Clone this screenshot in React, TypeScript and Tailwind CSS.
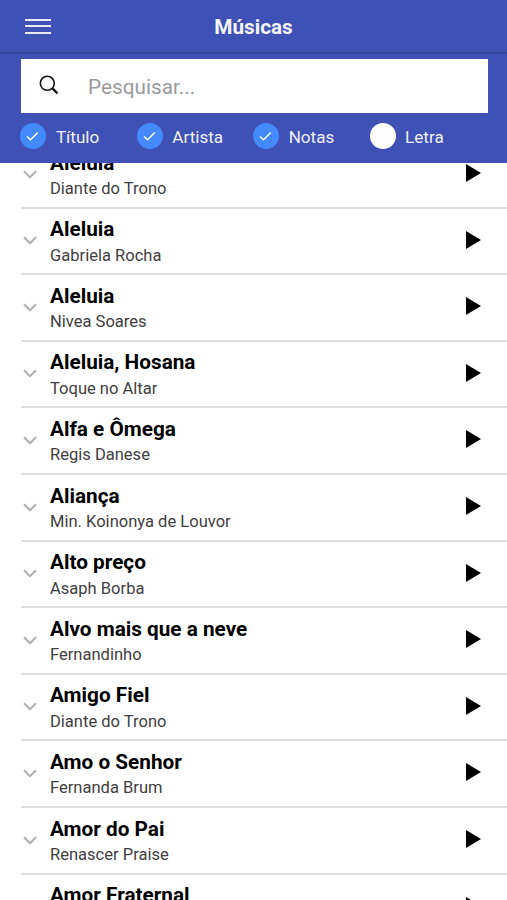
import React from "react";

interface Song {
    title: string;
    artist: string;
}

const songs: Song[] = [
    { title: "Aleluia", artist: "Diante do Trono" },
    { title: "Aleluia", artist: "Gabriela Rocha" },
    { title: "Aleluia", artist: "Nivea Soares" },
    { title: "Aleluia, Hosana", artist: "Toque no Altar" },
    { title: "Alfa e Ômega", artist: "Regis Danese" },
    { title: "Aliança", artist: "Min. Koinonya de Louvor" },
    { title: "Alto preço", artist: "Asaph Borba" },
    { title: "Alvo mais que a neve", artist: "Fernandinho" },
    { title: "Amigo Fiel", artist: "Diante do Trono" },
    { title: "Amo o Senhor", artist: "Fernanda Brum" },
    { title: "Amor do Pai", artist: "Renascer Praise" },
    { title: "Amor Fraternal", artist: "" },
];

const filters = [
    { label: "Título", checked: true },
    { label: "Artista", checked: true },
    { label: "Notas", checked: true },
    { label: "Letra", checked: false },
];

const FilterOption: React.FC<{ label: string; checked: boolean }> = ({ label, checked }) => (
    <button className="flex w-[116.4px] items-center gap-[9.5px]">
        <span
            className={`flex size-[26px] shrink-0 items-center justify-center rounded-full ${
                checked ? "bg-[#448aff]" : "bg-white"
            }`}
        >
            {checked && (
                <svg viewBox="0 0 26 26" className="size-[26px]" fill="none" stroke="#fff" strokeWidth="1.4">
                    <path d="M7 13.4l3.5 3.4 7.3-7.4" />
                </svg>
            )}
        </span>
        <span className="pt-px text-[17.1px] leading-6 text-[#eef0fb]">{label}</span>
    </button>
);

const SongRow: React.FC<{ song: Song }> = ({ song }) => (
    <li className="ml-[21px] flex h-[66.6px] border-b-2 border-[#dedede]">
        <svg
            viewBox="0 0 14 9"
            className="mt-[27.7px] ml-[2px] h-[9px] w-[14px] shrink-0"
            fill="none"
            stroke="#b2b2b2"
            strokeWidth="2.2"
        >
            <path d="M1 1.3l6 5.9 6-5.9" />
        </svg>
        <div className="ml-[13px] flex-1 pt-[7.7px]">
            <h2 className="text-[20.75px] leading-[26px] font-bold text-black">{song.title}</h2>
            <p className="pt-[1.3px] text-[16.55px] leading-[24px] text-[#404040]">{song.artist}</p>
        </div>
        <svg viewBox="0 0 15 18" className="mt-[22px] mr-[26px] h-[18px] w-[15px] shrink-0">
            <path d="M0 0l15 9-15 9z" />
        </svg>
    </li>
);

const App: React.FC = () => {
    return (
        <div className="h-screen overflow-hidden bg-white font-['Roboto',sans-serif]">
            <header className="relative z-10 h-[163px] bg-[#3f51b5]">
                <div className="grid h-[54px] grid-cols-[1fr_auto_1fr] items-center border-b-2 border-[#37479e]">
                    <button className="ml-[25px] flex w-[26px] flex-col gap-[4.5px]">
                        <span className="h-[2px] w-full bg-[#e8eaf8]" />
                        <span className="h-[2px] w-full bg-[#e8eaf8]" />
                        <span className="h-[2px] w-full bg-[#e8eaf8]" />
                    </button>
                    <h1 className="pt-[3.5px] text-[20.75px] font-bold text-[#f4f5fd]">Músicas</h1>
                </div>
                <div className="mt-[5px] mr-[19.5px] ml-[20.5px] flex h-[54px] items-center bg-white">
                    <svg
                        viewBox="0 0 20 20"
                        className="mb-[3px] ml-[18.5px] size-5 shrink-0"
                        fill="none"
                        stroke="#111"
                    >
                        <circle cx="8.3" cy="8.3" r="7" strokeWidth="1.6" />
                        <path d="M13.2 13.2l5.3 5.3" strokeWidth="2.4" />
                    </svg>
                    <input
                        type="text"
                        placeholder="Pesquisar..."
                        className="ml-[29px] flex-1 pt-[3.5px] text-[20.75px] placeholder-[#9a9a9a] outline-none"
                    />
                </div>
                <div className="mt-[10px] flex pl-[20.4px]">
                    {filters.map((filter) => (
                        <FilterOption key={filter.label} {...filter} />
                    ))}
                </div>
            </header>
            <ul className="-mt-[21px]">
                {songs.map((song, index) => (
                    <SongRow key={index} song={song} />
                ))}
            </ul>
        </div>
    );
};

export default App;
